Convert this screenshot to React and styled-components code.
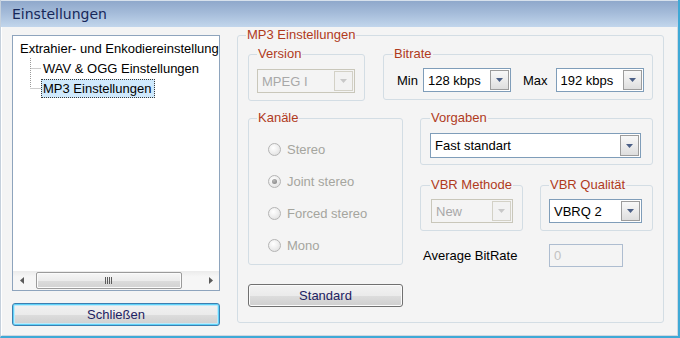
import React from 'react';
import styled, { createGlobalStyle } from 'styled-components';

const GlobalStyle = createGlobalStyle`
  html, body { margin: 0; padding: 0; background: #f4f4f4; }
  body { font-family: "Liberation Sans", Arial, sans-serif; font-size: 13px; color: #000; }
  #root { width: 680px; height: 338px; }
`;

const Window = styled.div`
  box-sizing: border-box;
  width: 680px;
  height: 338px;
  display: flex;
  flex-direction: column;
  border-left: 1px solid #c5d0dc;
  border-right: 2px solid #3fa9d6;
  border-bottom: 2px solid #3fa9d6;
  background: #f4f4f4;
  overflow: hidden;
`;

const TitleBar = styled.div`
  flex: none;
  height: 27px;
  box-sizing: border-box;
  display: flex;
  align-items: center;
  padding-left: 11px;
  border-top: 1px solid #d7e1ec;
  background: linear-gradient(to bottom, #8fa8cb 0%, #a4bbd9 45%, #c2d6ec 100%);
`;

const Title = styled.span`
  font-family: "DejaVu Sans", sans-serif;
  font-size: 14px;
  color: #17285a;
`;

const Body = styled.div`
  flex: 1;
  display: flex;
  align-items: flex-start;
  gap: 17px;
  padding: 1px 13px 0 10px;
  border-left: 1px solid #ffffff;
  border-right: 1px solid #cfd8e1;
  border-bottom: 1px solid #cfd8e1;
`;

const LeftCol = styled.div`
  flex: none;
  width: 208px;
  margin-top: 7px;
  display: flex;
  flex-direction: column;
  gap: 12px;
`;

const Tree = styled.div`
  box-sizing: border-box;
  height: 256px;
  border: 1px solid #8ea4bd;
  background: #ffffff;
  display: flex;
  flex-direction: column;
`;

const TreeList = styled.div`
  flex: 1;
  padding: 2px 0 0 5px;
`;

const TreeRow = styled.div`
  height: 20px;
  display: flex;
  align-items: center;
  white-space: nowrap;
  padding-left: ${p => (p.$child ? 12 : 0)}px;
`;

const TreeLabel = styled.span`
  line-height: 17px;
  padding: 0 3px 0 1px;
  border: 1px ${p => (p.$selected ? 'dotted #3a3a3a' : 'solid transparent')};
  background: ${p => (p.$selected ? '#cfe9fc' : 'transparent')};
`;

const HScroll = styled.div`
  flex: none;
  height: 19px;
  display: flex;
  align-items: center;
  background: linear-gradient(to bottom, #ebebeb, #f6f6f6 30%, #f6f6f6);
`;

const ScrollArrow = styled.span`
  flex: none;
  width: 17px;
  height: 17px;
  display: flex;
  align-items: center;
  justify-content: center;
`;

const ScrollThumb = styled.span`
  box-sizing: border-box;
  width: 146px;
  height: 17px;
  margin-left: 6px;
  margin-right: auto;
  border: 1px solid #9b9b9b;
  border-radius: 2px;
  background: linear-gradient(to bottom, #f6f6f6 0%, #ececec 50%, #dcdcdc 51%, #d2d2d2 100%);
  box-shadow: inset 0 0 0 1px #fbfbfb;
  display: flex;
  align-items: center;
  justify-content: center;
`;

const PushButton = styled.button`
  box-sizing: border-box;
  width: ${p => p.$w}px;
  height: 23px;
  padding: 0;
  margin-top: ${p => p.$mt || 0}px;
  border: 1px solid ${p => (p.$default ? '#3c7fb1' : '#707070')};
  border-radius: 3px;
  background: linear-gradient(to bottom, #f2f2f2 0%, #ebebeb 50%, #dddddd 51%, #cfcfcf 100%);
  box-shadow: ${p =>
    p.$default
      ? 'inset 0 0 0 1px #5fd2f8, inset 0 0 0 2px #bfe9fa'
      : 'inset 0 0 0 1px #fbfbfb'};
  font-family: "Liberation Sans", Arial, sans-serif;
  font-size: 13px;
  color: #1d2262;
`;

const Group = styled.fieldset`
  box-sizing: border-box;
  flex: none;
  margin: 0;
  min-width: 0;
  width: ${p => p.$w}px;
  border: 1px solid #d3dde4;
  border-radius: 3px;
  padding: ${p => p.$pad};
`;

const GroupTitle = styled.legend`
  padding: 0 1px;
  margin-left: ${p => p.$ml || 0}px;
  line-height: 14px;
  font-size: 13px;
  color: #b03b1d;
  white-space: nowrap;
`;

const Row = styled.div`
  display: flex;
  align-items: ${p => p.$align || 'flex-start'};
  gap: ${p => p.$gap || 0}px;
  margin-top: ${p => p.$mt || 0}px;
`;

const Column = styled.div`
  flex: none;
  width: ${p => p.$w}px;
  display: flex;
  flex-direction: column;
`;

const FieldLabel = styled.span`
  white-space: nowrap;
  margin: ${p => p.$m || '0'};
`;

const ComboBox = styled.div`
  box-sizing: border-box;
  flex: none;
  width: ${p => p.$w}px;
  height: ${p => p.$h || 24}px;
  display: flex;
  padding: 1px;
  border: 1px solid ${p => (p.$disabled ? '#c9c7ba' : '#7f9db9')};
  background: ${p => (p.$disabled ? '#f4f4f4' : '#ffffff')};
`;

const ComboText = styled.span`
  flex: 1;
  display: flex;
  align-items: center;
  padding-left: 3px;
  white-space: nowrap;
  color: ${p => (p.$disabled ? '#a8a8a8' : '#000000')};
`;

const ComboButton = styled.span`
  box-sizing: border-box;
  flex: none;
  width: 19px;
  display: flex;
  align-items: center;
  justify-content: center;
  border: 1px solid ${p => (p.$disabled ? '#d3d1c6' : '#9c9c9c')};
  background: ${p =>
    p.$disabled
      ? '#f2f2f2'
      : 'linear-gradient(to bottom, #f8f8f8 0%, #ececec 50%, #dedede 100%)'};
`;

const RadioRow = styled.div`
  height: 32px;
  display: flex;
  align-items: center;
  gap: 6px;
  padding-left: 11px;
  color: #a5a59e;
`;

const RadioCircle = styled.span`
  box-sizing: border-box;
  width: 13px;
  height: 13px;
  border-radius: 50%;
  border: 1px solid #b4b4b4;
  background: radial-gradient(circle at 40% 35%, #ffffff 0%, #eeeeee 50%, #dadada 100%);
  display: flex;
  align-items: center;
  justify-content: center;
`;

const RadioDot = styled.span`
  width: 5px;
  height: 5px;
  border-radius: 50%;
  background: radial-gradient(circle at 40% 35%, #b8b8b8, #7c7c7c);
`;

const TextInput = styled.div`
  box-sizing: border-box;
  width: ${p => p.$w}px;
  height: 23px;
  padding-left: 4px;
  display: flex;
  align-items: center;
  border: 1px solid #aebdd0;
  color: #c2c2c2;
`;

const AvgRow = styled.div`
  display: grid;
  grid-template-columns: 126px auto;
  align-items: center;
  margin-top: 13px;
  padding-left: 3px;
`;

const Arrow = ({ disabled }) => (
  <svg width="7" height="4" viewBox="0 0 7 4">
    <path d="M0 0 H7 L3.5 4 Z" fill={disabled ? '#c8c8c8' : '#4b5f86'} />
  </svg>
);

const Combo = ({ w, h, value, disabled }) => (
  <ComboBox $w={w} $h={h} $disabled={disabled}>
    <ComboText $disabled={disabled}>{value}</ComboText>
    <ComboButton $disabled={disabled}>
      <Arrow disabled={disabled} />
    </ComboButton>
  </ComboBox>
);

const Radio = ({ label, checked }) => (
  <RadioRow>
    <RadioCircle>{checked && <RadioDot />}</RadioCircle>
    <span>{label}</span>
  </RadioRow>
);

const TreeLines = ({ last }) => (
  <svg width="11" height="20" viewBox="0 0 11 20" style={{ flex: 'none' }}>
    <path
      d={`M0.5 0 V${last ? 10 : 20} M0.5 10.5 H11`}
      stroke="#9a9a9a"
      strokeWidth="1"
      strokeDasharray="1 1"
      fill="none"
    />
  </svg>
);

const ScrollTri = ({ dir }) => (
  <svg width="4" height="7" viewBox="0 0 4 7">
    <path d={dir === 'left' ? 'M4 0 V7 L0 3.5 Z' : 'M0 0 V7 L4 3.5 Z'} fill="#5a5a5a" />
  </svg>
);

const Gripper = () => (
  <svg width="8" height="7" viewBox="0 0 8 7">
    <path d="M0.5 0 V7 M2.5 0 V7 M4.5 0 V7 M6.5 0 V7" stroke="#5c5c5c" strokeWidth="1" />
  </svg>
);

export default function App() {
  return (
    <>
      <GlobalStyle />
      <Window>
        <TitleBar>
          <Title>Einstellungen</Title>
        </TitleBar>
        <Body>
          <LeftCol>
            <Tree>
              <TreeList>
                <TreeRow>
                  <TreeLabel>Extrahier- und Enkodiereinstellung</TreeLabel>
                </TreeRow>
                <TreeRow $child>
                  <TreeLines />
                  <TreeLabel>WAV &amp; OGG Einstellungen</TreeLabel>
                </TreeRow>
                <TreeRow $child>
                  <TreeLines last />
                  <TreeLabel $selected>MP3 Einstellungen</TreeLabel>
                </TreeRow>
              </TreeList>
              <HScroll>
                <ScrollArrow>
                  <ScrollTri dir="left" />
                </ScrollArrow>
                <ScrollThumb>
                  <Gripper />
                </ScrollThumb>
                <ScrollArrow>
                  <ScrollTri dir="right" />
                </ScrollArrow>
              </HScroll>
            </Tree>
            <PushButton $w={208} $default>Schließen</PushButton>
          </LeftCol>

          <Group $w={427} $pad="5px 10px 15px 10px">
            <GroupTitle $ml={-2}>MP3 Einstellungen</GroupTitle>
            <Row $gap={18}>
              <Group $w={117} $pad="8px 9px 7px 8px">
                <GroupTitle>Version</GroupTitle>
                <Combo w={98} value="MPEG I" disabled />
              </Group>
              <Group $w={270} $pad="7px 8px 7px 13px">
                <GroupTitle $ml={-4}>Bitrate</GroupTitle>
                <Row $align="center">
                  <FieldLabel $m="0 5px 0 0">Min</FieldLabel>
                  <Combo w={88} value="128 kbps" />
                  <FieldLabel $m="0 8px 0 12px">Max</FieldLabel>
                  <Combo w={88} value="192 kbps" />
                </Row>
              </Group>
            </Row>
            <Row $gap={17} $mt={10}>
              <Column $w={155}>
                <Group $w={155} $pad="8px 8px 3px 8px">
                  <GroupTitle>Kanäle</GroupTitle>
                  <Radio label="Stereo" />
                  <Radio label="Joint stereo" checked />
                  <Radio label="Forced stereo" />
                  <Radio label="Mono" />
                </Group>
                <PushButton $w={155} $mt={19}>Standard</PushButton>
              </Column>
              <Column $w={233}>
                <Group $w={233} $pad="8px 11px 6px 9px">
                  <GroupTitle>Vorgaben</GroupTitle>
                  <Combo w={211} h={25} value="Fast standart" />
                </Group>
                <Row $gap={17} $mt={13}>
                  <Group $w={103} $pad="7px 9px 7px 10px">
                    <GroupTitle $ml={-1}>VBR Methode</GroupTitle>
                    <Combo w={82} value="New" disabled />
                  </Group>
                  <Group $w={113} $pad="7px 10px 7px 8px">
                    <GroupTitle>VBR Qualität</GroupTitle>
                    <Combo w={93} value="VBRQ 2" />
                  </Group>
                </Row>
                <AvgRow>
                  <FieldLabel>Average BitRate</FieldLabel>
                  <TextInput $w={74}>0</TextInput>
                </AvgRow>
              </Column>
            </Row>
          </Group>
        </Body>
      </Window>
    </>
  );
}
